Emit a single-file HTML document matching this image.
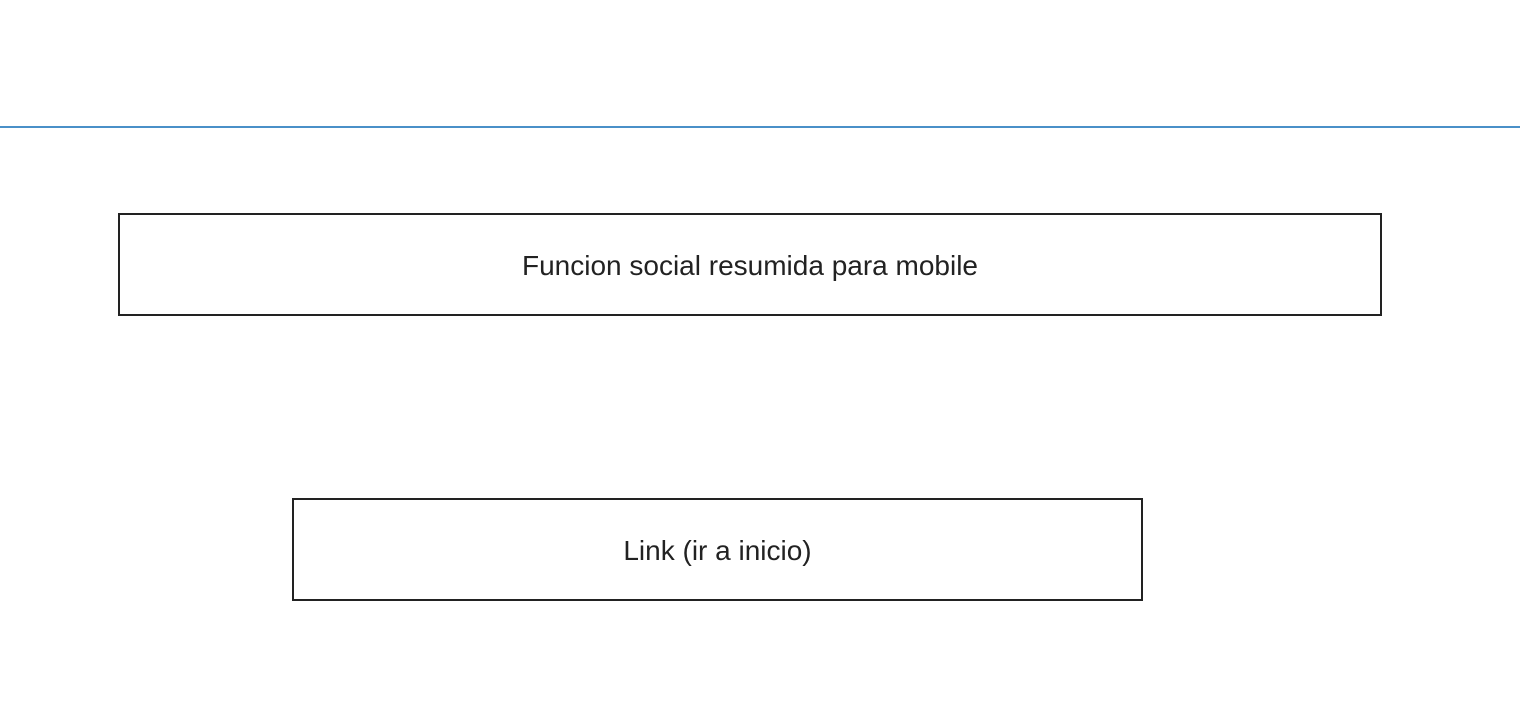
<!DOCTYPE html>
<html><head><style>
body{margin:0;width:1520px;height:720px;background:#fff;position:relative;font-family:"Liberation Sans",Arial,sans-serif;overflow:hidden}
.line{position:absolute;left:0;top:126px;width:1520px;height:2px;background:#4a90c8}
.box{position:absolute;box-sizing:border-box;border:2px solid #222;display:flex;align-items:center;justify-content:center;font-size:28px;color:#222;padding-top:3px}
</style></head><body>
<div class="line"></div>
<div class="box" style="left:118px;top:213px;width:1264px;height:103px">Funcion social resumida para mobile</div>
<div class="box" style="left:292px;top:498px;width:851px;height:103px">Link (ir a inicio)</div>
</body></html>
